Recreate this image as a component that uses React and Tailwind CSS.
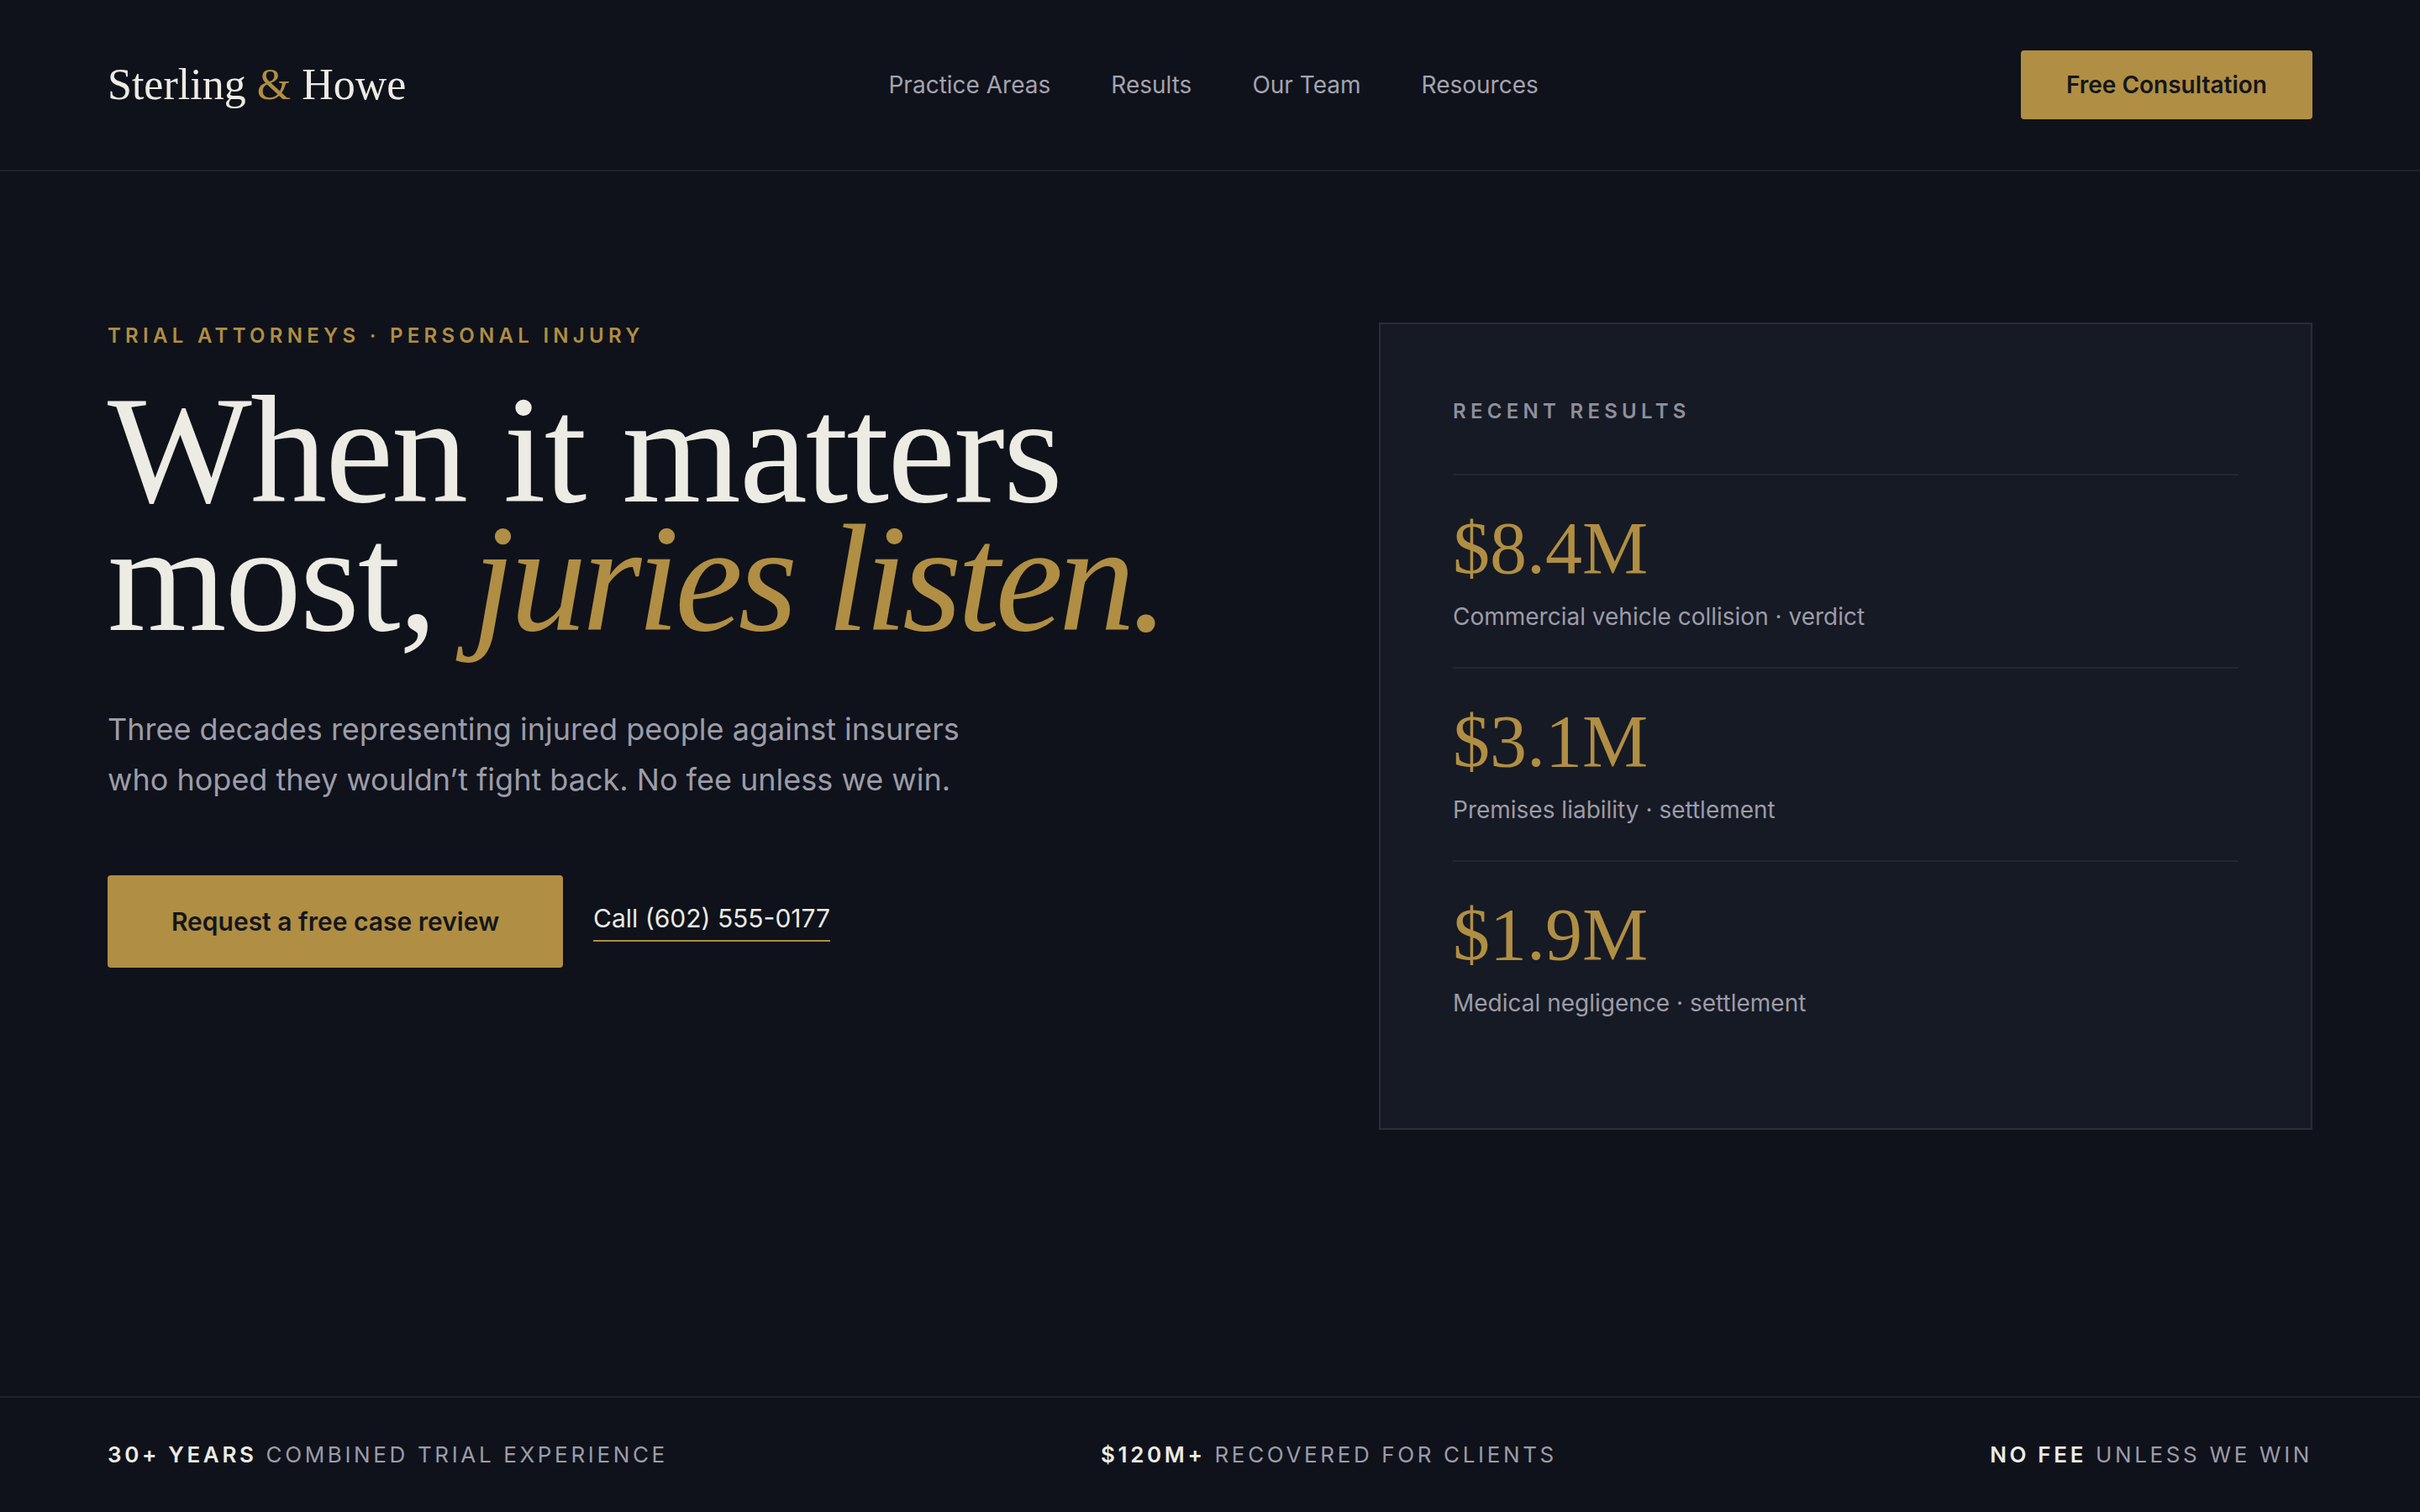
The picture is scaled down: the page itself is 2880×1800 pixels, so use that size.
import React from "react";

const serif = "font-['Liberation_Serif','Times_New_Roman',serif]";

const results = [
  { amount: "$8.4M", label: "Commercial vehicle collision · verdict" },
  { amount: "$3.1M", label: "Premises liability · settlement" },
  { amount: "$1.9M", label: "Medical negligence · settlement" },
];

const stats = [
  { strong: "30+ YEARS", rest: "COMBINED TRIAL EXPERIENCE" },
  { strong: "$120M+", rest: "RECOVERED FOR CLIENTS" },
  { strong: "NO FEE", rest: "UNLESS WE WIN" },
];

function Header() {
  return (
    <header className="h-[204px] shrink-0 px-[128px] flex items-center justify-between border-b-2 border-[#1e222b]">
      <a href="#" className={`${serif} text-[52px] leading-[78px] text-[#ecebe4]`}>
        Sterling <span className="text-[#b08e43]">&amp;</span> Howe
      </a>
      <nav className="flex items-center gap-[72px] text-[28px] leading-[40px] text-[#a3a3b0]">
        <a href="#">Practice Areas</a>
        <a href="#">Results</a>
        <a href="#">Our Team</a>
        <a href="#">Resources</a>
      </nav>
      <a
        href="#"
        className="h-[82px] px-[54px] flex items-center rounded-[4px] bg-[#b08e43] text-[28px] font-semibold text-[#14161c]"
      >
        Free Consultation
      </a>
    </header>
  );
}

function Hero() {
  return (
    <div className="flex flex-col">
      <p className="text-[24px] leading-[32px] font-semibold tracking-[0.22em] text-[#b08e43]">
        TRIAL ATTORNEYS · PERSONAL INJURY
      </p>
      <h1 className={`${serif} mt-[43px] text-[182px] leading-[153px] tracking-[-0.01em] text-[#ecebe4] font-normal`}>
        When it matters
        <br />
        most, <em className="italic text-[#b08e43] tracking-[-0.03em]">juries listen.</em>
      </h1>
      <p className="mt-[73px] max-w-[1060px] text-[36px] leading-[60px] text-[#9c9ca9]">
        Three decades representing injured people against insurers who hoped they wouldn’t fight back. No fee
        unless we win.
      </p>
      <div className="mt-[84px] flex items-center gap-[36px]">
        <a
          href="#"
          className="h-[110px] w-[542px] flex items-center justify-center rounded-[4px] bg-[#b08e43] text-[30px] font-semibold text-[#14161c]"
        >
          Request a free case review
        </a>
        <a
          href="#"
          className="pb-[6px] border-b-2 border-[#b08e43] text-[30px] leading-[40px] text-[#ecebe4]"
        >
          Call (602) 555-0177
        </a>
      </div>
    </div>
  );
}

function ResultsCard() {
  return (
    <aside className="w-[1111px] border-2 border-[#292d38] bg-[#161a24] px-[86px] pt-[86px] pb-[89px]">
      <h2 className="text-[24px] leading-[36px] font-semibold tracking-[0.22em] text-[#8e8f9c]">
        RECENT RESULTS
      </h2>
      <ul className="mt-[56px]">
        {results.map((r) => (
          <li key={r.amount} className="border-t-2 border-[#232733] pt-[43px] pb-[39px]">
            <div className={`${serif} text-[88px] leading-[88px] text-[#b08e43]`}>{r.amount}</div>
            <div className="mt-[16px] text-[28px] leading-[42px] text-[#9c9ca9]">{r.label}</div>
          </li>
        ))}
      </ul>
    </aside>
  );
}

function StatsBar() {
  return (
    <footer className="h-[138px] shrink-0 border-t-2 border-[#1f232c] px-[128px] flex items-center justify-between text-[26px] leading-[36px] tracking-[0.14em]">
      {stats.map((s) => (
        <p key={s.strong} className="text-[#9c9ca9]">
          <span className="font-semibold text-[#ecebe4]">{s.strong}</span> {s.rest}
        </p>
      ))}
    </footer>
  );
}

export default function App() {
  return (
    <div className="min-h-screen flex flex-col bg-[#0f121a] font-['Inter','Liberation_Sans',sans-serif] antialiased">
      <Header />
      <main className="flex-1 px-[128px] pt-[180px] flex items-start justify-between">
        <Hero />
        <ResultsCard />
      </main>
      <StatsBar />
    </div>
  );
}
